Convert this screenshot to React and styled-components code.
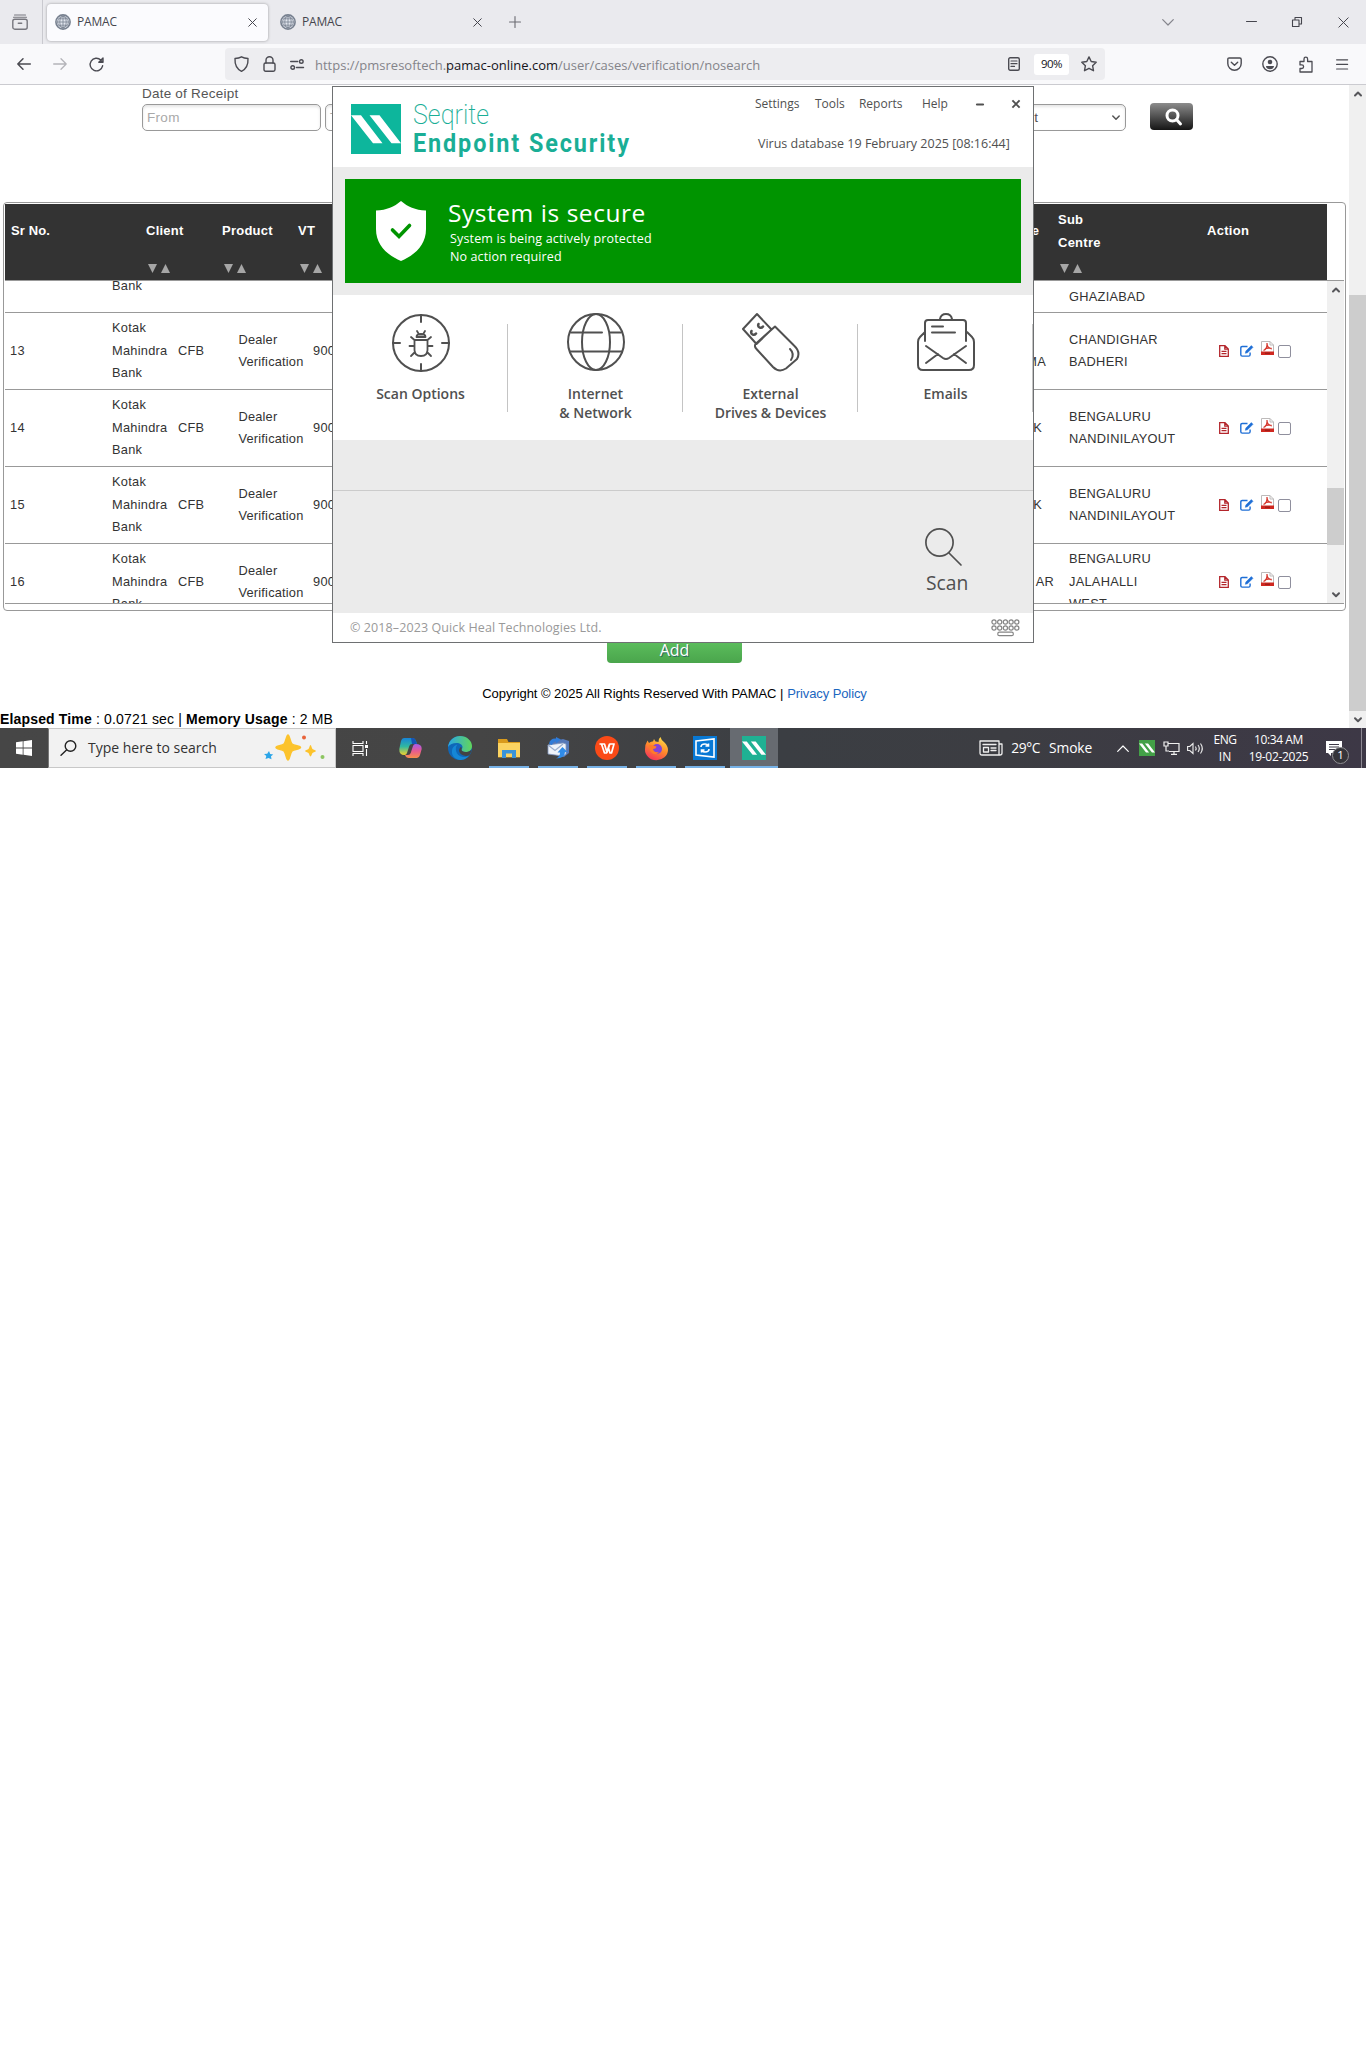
import React from "react";
import styled, { createGlobalStyle } from "styled-components";

const ui = `"Open Sans", "Noto Sans", sans-serif`;
const arial = `"Liberation Sans", Arial, sans-serif`;

const Global = createGlobalStyle`
  * { box-sizing: border-box; }
  body { margin: 0; background: #fff; font-family: ${arial}; }
`;

const Desktop = styled.div`
  position: relative; width: 1366px; height: 2060px; overflow: hidden;
  display: flex; flex-direction: column; background: #fff;
`;

/* Text run with its own size, tracking and colour */
const Text = styled.span`
  display: block; white-space: nowrap; flex: none;
  font-family: ${(p) => p.$font || ui};
  font-size: ${(p) => p.$size || 12}px;
  font-weight: ${(p) => p.$weight || 400};
  letter-spacing: ${(p) => p.$track || 0}px;
  line-height: ${(p) => (p.$line ? p.$line + "px" : "1.3")};
  color: ${(p) => p.$color || "inherit"};
`;

const Svg = styled.svg`display: block; flex: none; overflow: visible;`;

/* Icon slot: fixed width so that icons sit on a regular pitch */
const Slot = styled.div`
  width: ${(p) => p.$w}px; height: ${(p) => (p.$h ? p.$h + "px" : "100%")}; flex: none;
  display: flex; align-items: center; justify-content: center;
`;
const Spacer = styled.div`flex: 1;`;

/* ---------- Browser chrome ---------- */
const TabBar = styled.div`
  height: 44px; background: #eaeaee; display: flex; align-items: center; flex: none; color: #45454d;
`;
const FirefoxView = styled.div`
  width: 43px; height: 44px; border-right: 1px solid #c9c9cf; display: flex; align-items: center; padding-left: 12px;
`;
const Tab = styled.div`
  width: 221px; height: 37px; margin-left: 4px; padding: 0 9px 0 8px; border-radius: 4px;
  display: flex; align-items: center; gap: 6px;
  background: ${(p) => (p.$active ? "#fbfbfe" : "transparent")};
  box-shadow: ${(p) => (p.$active ? "0 0 3px rgba(0,0,0,.35)" : "none")};
`;
const NavBar = styled.div`
  height: 41px; flex: none; background: #f9f9fb; border-bottom: 1px solid #cbcbd0; display: flex; align-items: center;
  padding-left: 6px; color: #4b4b52;
`;
const UrlBar = styled.div`
  width: 880px; height: 32px; margin-left: 111px; border-radius: 4px; background: #ededf0;
  display: flex; align-items: center; padding-left: 2px;
`;
const UrlText = styled(Text)`margin-left: 4px; padding-top: 2px; color: #84848a; b { font-weight: 400; color: #15141a; }`;
const Zoom = styled.div`
  width: 35px; height: 21px; border-radius: 3px; background: #fff; display: flex; align-items: center; justify-content: center; margin: 1px 3px 0 6px;
  color: #15141a;
`;

const Globe = () => (
  <Svg width="16" height="16" viewBox="0 0 16 16" fill="none" stroke="#77808f">
    <circle cx="8" cy="8" r="7.1" strokeWidth="1.6" fill="#e2e6ee" />
    <path d="M8 2v12M2.3 8h11.4M3.5 4.8h9M3.5 11.2h9" strokeWidth=".8" />
    <ellipse cx="8" cy="8" rx="3.2" ry="6" strokeWidth=".8" />
    <circle cx="8" cy="8" r="5.4" strokeWidth=".8" />
  </Svg>
);
const Cross = ({ s = 9, w = 1.1, c = "currentColor" }) => (
  <Svg width={s} height={s} viewBox="0 0 10 10" stroke={c} strokeWidth={w}><path d="M.5 .5l9 9M9.5 .5l-9 9" /></Svg>
);
const Line = ({ w, h, vb, d, sw = 1.4, fill = "none", c = "currentColor", children }) => (
  <Svg width={w} height={h} viewBox={vb || `0 0 ${w} ${h}`} fill={fill} stroke={c} strokeWidth={sw} strokeLinecap="round" strokeLinejoin="round">
    {d && <path d={d} />}{children}
  </Svg>
);

function Browser() {
  return (
    <>
      <TabBar>
        <FirefoxView>
          <Line w={16} h={16} d="M2.5 1h11M1.5 3.2h13" sw={1.1} c="#77777e">
            <rect x=".8" y="5.2" width="14.4" height="10" rx="2" strokeWidth="1.4" /><path d="M6.3 9.3h3.4" strokeWidth="1.4" />
          </Line>
        </FirefoxView>
        {[true, false].map((active) => (
          <Tab key={String(active)} $active={active}>
            <Globe /><Text $size={12} $track={-0.2}>PAMAC</Text><Spacer /><Slot $w={14}><Cross /></Slot>
          </Tab>
        ))}
        <Slot $w={43}><Line w={12} h={12} d="M6 .5v11M.5 6h11" sw={1.1} c="#6a6a72" /></Slot>
        <Spacer />
        <Slot $w={30}><Line w={12} h={7} d="M.7 .7l5.3 5.3L11.3 .7" sw={1.2} c="#85858c" /></Slot>
        <Slot $w={52} /><Slot $w={32}><Line w={11} h={2} d="M.5 .5h10" sw={1} /></Slot>
        <Slot $w={14} /><Slot $w={32}><Line w={10} h={10} d="M.5 3h6.5v6.5H.5zM3 3V.5h6.5V7H7" sw={1.1} /></Slot>
        <Slot $w={14} /><Slot $w={32}><Cross s={11} w={0.9} /></Slot><Slot $w={7} />
      </TabBar>
      <NavBar>
        <Slot $w={36}><Line w={14} h={12} d="M13.3 6H.8M6 .8L.8 6 6 11.2" sw={1.5} /></Slot>
        <Slot $w={36}><Line w={14} h={12} d="M.7 6h12.5M8 .8L13.2 6 8 11.2" sw={1.3} c="#b4b4b9" /></Slot>
        <Slot $w={36}><Line w={15} h={15} d="M13.6 8.8A6.3 6.3 0 1 1 11.8 3L13.8 5M14 1v4.2H9.8z" sw={1.4} /></Slot>
        <UrlBar>
          <Slot $w={28}><Line w={15} h={16} d="M7.5 .8c2 1.2 4 1.6 6.5 1.7.3 6-1.7 10.500-6.500 12.800C2.700 13 .7 8.500 1 2.500 3.500 2.400 5.500 2 7.500 .8z" /></Slot>
          <Slot $w={28}><Line w={13} h={16} d="M3 7V4.200a3.500 3.500 0 0 1 7 0V7"><rect x="1" y="7" width="11" height="8.200" rx="1.600" /></Line></Slot>
          <Slot $w={28}><Line w={14} h={11} d="M.7 2.500h7M6.500 8.500h7"><circle cx="11.300" cy="2.500" r="1.800" /><circle cx="2.700" cy="8.500" r="1.800" /></Line></Slot>
          <UrlText $size={13} $track={0}>https://pmsresoftech.<b>pamac-online.com</b>/user/cases/verification/nosearch</UrlText>
          <Spacer />
          <Slot $w={28}><Line w={12} h={14} d="M3 4h6M3 6.700h6M3 9.400h3.500" sw={1.200}><rect x=".7" y=".7" width="10.600" height="12.600" rx="1.500" strokeWidth="1.400" /></Line></Slot>
          <Zoom><Text $size={11.5} $track={-0.5}>90%</Text></Zoom>
          <Slot $w={33}><Line w={16} h={16} d="M8 .9l2.200 4.600 5 .7-3.600 3.500.9 5L8 12.300 3.500 14.700l.9-5L.8 6.200l5-.7z" /></Slot>
        </UrlBar>
        <Spacer />
        <Slot $w={36}><Line w={15} h={14} d="M2.200 1h10.600q1.400 0 1.400 1.400V6.500a6.700 6.700 0 0 1-13.400 0V2.400Q.8 1 2.200 1zM4.300 5.300l3.200 3 3.200-3" /></Slot>
        <Slot $w={36}><Line w={16} h={16}><circle cx="8" cy="8" r="7.200" /><circle cx="8" cy="6" r="2.300" fill="currentColor" stroke="none" /><path d="M4 10h8c0 2-2 3.300-4 3.300S4 12 4 10z" fill="currentColor" stroke="none" /></Line></Slot>
        <Slot $w={36}><Line w={14} h={17} d="M1 7V5.500h4V3a1.800 1.800 0 0 1 3.600 0v2.500h4.400v10.500H1v-3.500h1.800a1.800 1.800 0 0 0 0-3.600H1z" sw={1.300} /></Slot>
        <Slot $w={36}><Line w={12} h={11} d="M.6 .8h11M.6 5.400h11M.6 10h11" sw={1.200} /></Slot>
        <Slot $w={6} />
      </NavBar>
    </>
  );
}

/* ---------- Web page ---------- */
const Page = styled.div`height: 643px; flex: none; display: flex;`;
const Content = styled.div`width: 1349px; display: flex; flex-direction: column; overflow: hidden;`;
const ScrollTrack = styled.div`
  width: 17px; flex: none; background: #f0f0f0; display: flex; flex-direction: column;
  > :last-child { margin-top: auto; }
`;
const Thumb = styled.div`height: ${(p) => p.$h}px; margin-top: ${(p) => p.$top}px; background: #cdcdcd;`;
const ScrollArrow = ({ down }) => (
  <Slot $w={17} $h={17}>
    <Line w={8} h={6} d={down ? "M1 1.200l3 3 3-3" : "M1 4.500l3-3 3 3"} sw={2} c="#56565a" />
  </Slot>
);

const FilterLabel = styled(Text)`margin: 1px 0 2px 142px;`;
const Filters = styled.div`display: flex; padding-left: 142px; height: 27px; align-items: center;`;
const Field = styled.div`
  width: ${(p) => p.$w}px; margin-right: ${(p) => p.$mr || 0}px; height: 27px; border: 1px solid #999; border-radius: 5px;
  box-shadow: inset 0 2px 3px rgba(0,0,0,.1);
  display: flex; align-items: center; padding: 0 5px 0 4px; color: #555;
`;
const FieldText = styled(Text)`margin-left: ${(p) => p.$ml || 0}px;`;
const SearchButton = styled.div`
  width: 43px; height: 27px; margin: -3px 0 0 24px; border-radius: 4px; background: linear-gradient(#8c8c8c, #151515);
  display: flex; align-items: center; justify-content: center; padding: 2px 0 0 3px;
`;

const TableFrame = styled.div`
  margin: 71px 0 0 3px; width: 1343px; height: 409px; flex: none; border: 1px solid #999; border-radius: 4px; padding: 1px 1px 0 1px;
`;
const HeadRow = styled.div`
  width: 1322px; height: 76px; background: #333; color: #fff; display: grid;
  grid-template-columns: 141px 76px 76px 200px 541px 19px 149px 120px;
`;
const HeadCell = styled.div`
  display: flex; flex-direction: column; justify-content: flex-end; padding-bottom: ${(p) => (p.$nosort ? 38 : 0)}px;
  align-items: ${(p) => (p.$end ? "flex-end" : "flex-start")};
`;
const HeadText = styled(Text)`padding-bottom: ${(p) => p.$pb || 0}px;`;
const Sorts = styled.div`display: flex; gap: 4px; margin-left: ${(p) => p.$ml ?? 2}px; height: 23px; align-items: center; padding-bottom: 1px;`;
const BodyWrap = styled.div`display: flex; height: 324px; border-top: 1px solid #999; border-bottom: 1px solid #999;`;
const Rows = styled.div`width: 1322px; overflow: hidden; color: #333;`;
const Row = styled.div`
  height: ${(p) => (p.$first ? 32 : 77)}px; border-bottom: 1px solid #999; display: grid; align-items: ${(p) => (p.$first ? "start" : "center")};
  grid-template-columns: 107px 66px 60.5px 74.5px 693px 63px 145px 1fr;
`;
const Cell = styled.div`
  display: flex; flex-direction: column; align-items: ${(p) => (p.$end ? "flex-end" : "flex-start")};
  padding-right: ${(p) => p.$pr || 0}px; padding-left: ${(p) => p.$pl || 0}px; margin-top: ${(p) => p.$mt || 0}px;
`;
const Actions = styled.div`display: flex; align-items: center; height: 14px; margin-top: -1px;`;
const PdfSlot = styled.div`width: 13px; margin: -5px 4px 0 1px;`;
const CheckBox = styled.div`width: 13px; height: 13px; border: 1px solid #8f8f9d; border-radius: 2px; background: #fff; margin-top: 1px;`;

const AddRow = styled.div`display: flex; justify-content: center; height: 52px; flex: none;`;
const AddButton = styled.div`
  width: 135px; height: 34px; margin-top: 18px; border-radius: 4px; background: linear-gradient(#66cc66, #4aa54c);
  display: flex; justify-content: center; align-items: center; padding-top: 9px; color: #fff; text-shadow: 1px 1px 0 #2a6b60;
`;
const Copyright = styled.div`
  display: flex; justify-content: center; gap: 4px; margin-top: 22px; color: #000; height: 18px; flex: none;
`;
const Elapsed = styled(Text)`margin-top: 8px; color: #000;`;

const sort = (ml) => (
  <Sorts $ml={ml}>
    <Svg width="9" height="9"><path d="M0 0h9L4.500 9z" fill="#a6a6a6" /></Svg>
    <Svg width="9" height="9"><path d="M0 9h9L4.500 0z" fill="#a6a6a6" /></Svg>
  </Sorts>
);
const Head = ({ children, pb = 15, ml }) => (
  <HeadCell>
    {children.map((t) => <HeadText key={t} $font={arial} $weight={700} $size={13} $track={0.25} $line={23}>{t}</HeadText>)}
    <Slot $w={1} $h={pb} />{sort(ml)}
  </HeadCell>
);
const BodyText = ({ children, track = 0.27 }) => <Text $font={arial} $size={12.8} $track={track} $line={22.4}>{children}</Text>;

const rows = [
  { n: "13", c: "MA", pr: 23, second: true, sub: ["CHANDIGHAR", "BADHERI"] },
  { n: "14", c: "K", pr: 27, sub: ["BENGALURU", "NANDINILAYOUT"] },
  { n: "15", c: "K", pr: 27, sub: ["BENGALURU", "NANDINILAYOUT"] },
  { n: "16", c: "AR", pr: 15, sub: ["BENGALURU", "JALAHALLI", "WEST"] },
];

const DocIcon = () => (
  <Svg width="10" height="12" viewBox="0 0 10 12" fill="none" stroke="#b3252b" strokeWidth="1.300">
    <path d="M.7 .7h5.300l3.300 3.300v7.300H.7zM5.800 .7V4.200h3.500M2.500 6.300h5M2.500 8.700h5" />
  </Svg>
);
const EditIcon = () => (
  <Svg width="14" height="12" viewBox="0 0 14 12" fill="none" stroke="#1f6fd6" strokeWidth="1.400">
    <path d="M7.500 1.500H2.200Q.8 1.500 .8 2.900v6.800Q.8 11.100 2.200 11.100h6.500q1.400 0 1.400-1.400V7.500" />
    <path d="M5.300 8.300l.5-2.200L11.300 .6l1.700 1.700-5.500 5.500z" fill="#1f6fd6" strokeWidth=".5" />
  </Svg>
);
const PdfIcon = () => (
  <Svg width="13" height="14" viewBox="0 0 13 14">
    <path d="M.5 .5h8.500l3.500 3.500v9.500H.5z" fill="#fff" stroke="#bdbaba" />
    <path d="M9 .5V4h3.500" fill="none" stroke="#bdbaba" />
    <path d="M2.500 9.500c2.500-1 4-3.500 3.500-7.500M6 2.500c0 3 1.700 4.800 4.800 5.300M4 7.800c2-.9 4-1 6.500-.4" fill="none" stroke="#d63a30" strokeWidth="1.300" />
    <path d="M0 10.500h13V14H0z" fill="#cf2820" /><path d="M4 12.200h5" stroke="#8d1a15" />
  </Svg>
);

function WebPage() {
  return (
    <Page>
      <Content>
        <FilterLabel $font={arial} $size={13.5} $line={16} $color="#555" $track={0.22}>Date of Receipt</FilterLabel>
        <Filters>
          <Field $w={179} $mr={4}><Text $font={arial} $size={13.5} $color="#a9a9a9" $track={0.3}>From</Text></Field>
          <Field $w={801}>
            <Text $font={arial} $size={13.5} $color="#a9a9a9">T</Text>
            <FieldText $font={arial} $size={13.5} $ml={696}>t</FieldText>
            <Spacer />
            <Line w={8} h={6} d="M.8 1l3.200 3.300L7.200 1" sw={1.500} c="#555" />
          </Field>
          <SearchButton>
            <Line w={17} h={18} c="#fff" sw={3}><circle cx="7.500" cy="7.500" r="5.500" /><path d="M11.500 11.500l4 4.500" /></Line>
          </SearchButton>
        </Filters>
        <TableFrame>
          <HeadRow>
            <HeadCell $nosort><Cell $pl={6}><HeadText $font={arial} $weight={700} $size={13} $track={0.1} $line={23}>Sr No.</HeadText></Cell></HeadCell>
            <Head>{["Client"]}</Head>
            <Head>{["Product"]}</Head>
            <Head>{["VT"]}</Head>
            <HeadCell $end $nosort><HeadText $font={arial} $weight={700} $size={13} $line={23}>e</HeadText></HeadCell>
            <div />
            <Head pb={3} ml={2}>{["Sub", "Centre"]}</Head>
            <HeadCell $nosort><HeadText $font={arial} $weight={700} $size={13} $track={0.3} $line={23}>Action</HeadText></HeadCell>
          </HeadRow>
          <BodyWrap>
            <Rows>
              <Row $first>
                <div /><Cell $mt={-6}><BodyText>Bank</BodyText></Cell><div /><div /><div /><div />
                <Cell $mt={5}><BodyText>GHAZIABAD</BodyText></Cell><div />
              </Row>
              {rows.map((r) => (
                <Row key={r.n}>
                  <Cell $pl={5}><BodyText>{r.n}</BodyText></Cell>
                  <Cell><BodyText>Kotak</BodyText><BodyText>Mahindra</BodyText><BodyText>Bank</BodyText></Cell>
                  <Cell><BodyText>CFB</BodyText></Cell>
                  <Cell><BodyText track={0.2}>Dealer</BodyText><BodyText track={0.2}>Verification</BodyText></Cell>
                  <Cell><BodyText>900</BodyText></Cell>
                  <Cell $end $pr={r.pr} $mt={r.second ? 23 : 0}><BodyText>{r.c}</BodyText></Cell>
                  <Cell>{r.sub.map((s) => <BodyText key={s}>{s}</BodyText>)}</Cell>
                  <Actions>
                    <Slot $w={20}><DocIcon /></Slot><Slot $w={26}><EditIcon /></Slot>
                    <PdfSlot><PdfIcon /></PdfSlot><CheckBox />
                  </Actions>
                </Row>
              ))}
            </Rows>
            <ScrollTrack><ScrollArrow /><Thumb $h={57} $top={190} /><ScrollArrow down /></ScrollTrack>
          </BodyWrap>
        </TableFrame>
        <AddRow><AddButton><Text $size={16} $weight={400}>Add</Text></AddButton></AddRow>
        <Copyright>
          <Text $font={arial} $size={13} $line={18} $track={-0.06}>Copyright © 2025 All Rights Reserved With PAMAC |</Text>
          <Text $font={arial} $size={13} $line={18} $track={-0.1} $color="#1b66c0">Privacy Policy</Text>
        </Copyright>
        <Elapsed $font={arial} $size={14} $line={17} $track={0.16}><b>Elapsed Time</b> : 0.0721 sec | <b>Memory Usage</b> : 2 MB</Elapsed>
      </Content>
      <ScrollTrack><ScrollArrow /><Thumb $h={416} $top={193} /><ScrollArrow down /></ScrollTrack>
    </Page>
  );
}

/* ---------- Security window floating over the page ---------- */
const Window = styled.div`
  position: absolute; left: 332px; top: 86px; width: 702px; height: 557px; background: #fff; border: 1px solid #6e7072;
  display: flex; flex-direction: column; color: #505050; overflow: hidden;
`;
const WinHeader = styled.div`height: 80px; flex: none; display: flex; padding: 17px 0 0 18px;`;
const Brand = styled.div`width: 300px; margin: -2px 0 0 12px; color: #1aae96;`;
const BrandThin = styled(Text)`transform: scaleX(.93); transform-origin: left;`;
const BrandBold = styled(Text)`width: 230px; transform: scaleX(.9); transform-origin: left;`;
const WinMenu = styled.div`display: flex; height: 26px; margin-top: -13px; align-items: center;`;
const MenuItem = styled(Text)`width: ${(p) => p.$w}px;`;
const HeaderRight = styled.div`margin-left: 44px; width: 280px;`;
const Virus = styled(Text)`margin: 16px 0 0 3px;`;
const StatusArea = styled.div`height: 128px; background: #ebebeb; padding: 12px; flex: none;`;
const Status = styled.div`height: 104px; background: #009400; color: #fff; display: flex; padding: 22px 0 0 31px;`;
const StatusText = styled.div`margin: -5px 0 0 22px;`;
const StatusLine = styled(Text)`padding-left: 2px;`;
const Tiles = styled.div`height: 145px; flex: none; display: flex;`;
const Tile = styled.div`
  width: 175px; flex: none; display: flex; flex-direction: column; align-items: center; padding-top: 19px;
  background: linear-gradient(#c4c4c4, #c4c4c4) right 29px / 1px 88px no-repeat;
`;
const TileIcon = styled.div`height: 70px;`;
const Lower = styled.div`height: 50px; flex: none; background: #ebebeb;`;
const ScanArea = styled.div`
  height: 123px; flex: none; background: #ebebeb; border-top: 1px solid #cbcbcb; display: flex; flex-direction: column; align-items: flex-end; padding: 37px 66px 0 0;
`;
const ScanButton = styled.div`width: 42px; display: flex; flex-direction: column; align-items: flex-start;`;
const ScanLabel = styled(Text)`margin: 4px 0 0 1px;`;
const WinFooter = styled.div`flex: 1; display: flex; align-items: center; justify-content: space-between; padding: 0 13px 0 17px; color: #999;`;
const FooterText = styled(Text)`padding-top: 2px;`;

const Logo = ({ s, bg }) => (
  <Svg width={s} height={s} viewBox="0 0 50 50">
    <path fill={bg} d="M0 0h50v50H0z" /><path fill="#fff" d="M0 11.300h10l21.500 28h-9.500zM18.500 11.300h10l21.500 28h-9.500z" />
  </Svg>
);
const tileIcons = {
  scan: (
    <Line w={58} h={58} sw={2}>
      <circle cx="29" cy="29" r="28" /><path d="M29 1v7M29 50v7M1 29h7M50 29h7" />
      <path d="M25 17l2 3.500h4l2-3.500M24.500 23q0-3 4.500-3t4.500 3zM22.500 26h13v10q0 6-6.500 6t-6.500-6zM19 23l3.500 3M39 23l-3.500 3M17.500 32h5M35.500 32h5M19 42l4-4M39 42l-4-4" strokeWidth="1.800" />
    </Line>
  ),
  net: (
    <Line w={58} h={58} sw={2}>
      <circle cx="29" cy="28" r="28" /><ellipse cx="29" cy="28" rx="14" ry="28" /><path d="M4 18.500h31M43 18.500h11M3 37.500h52" />
    </Line>
  ),
  usb: (
    <Line w={58} h={58} sw={2}>
      <path d="M1 15L15 0 29.500 15.500 14.500 30zM13.500 30L33 12.500 52 31.500Q59 38 55 45L44 54.500Q37 59 31 53L14.500 35Q12 32.500 13.500 30z" fill="#fff" />
      <path d="M48 35Q53 40 49 46" />
      <path d="M9.500 17q-1 2.500 1 3.500t3.500-1M16.500 10q-1 2.500 1 3.500t3.500-1" strokeWidth="2.500" />
    </Line>
  ),
  mail: (
    <Line w={58} h={58} sw={2}>
      <path d="M8 27V9q0-3 3-3h35q3 0 3 3v18M23 5q1-5 6-5t6 5M8 18L3 23q-2 2-2 5v23q0 5 5 5h46q5 0 5-5V28q0-3-2-5l-5-5M9 32l17 12q3 2 6 0L49 32M9 49l12-9M49 49l-12-9M15 12.500h11M15 18.500h23" />
    </Line>
  ),
};
const tiles = [["scan", "Scan Options"], ["net", "Internet", "& Network"], ["usb", "External", "Drives & Devices"], ["mail", "Emails"]];

function SecurityWindow() {
  return (
    <Window>
      <WinHeader>
        <Logo s={50} bg="#0db69c" />
        <Brand>
          <BrandThin $font="Roboto, sans-serif" $size={27} $weight={200} $line={27}>Seqrite</BrandThin>
          <BrandBold $font="Roboto, sans-serif" $size={26} $weight={700} $line={28} $track={2.1}>Endpoint Security</BrandBold>
        </Brand>
        <HeaderRight>
          <WinMenu>
            <MenuItem $w={60}>Settings</MenuItem><MenuItem $w={44}>Tools</MenuItem><MenuItem $w={63}>Reports</MenuItem><MenuItem $w={54}>Help</MenuItem>
            <Slot $w={8}><Line w={8} h={2} d="M1 1.500h6" sw={2.200} /></Slot><Slot $w={28} /><Cross s={8} w={2.400} />
          </WinMenu>
          <Virus $size={12.5} $line={22}>Virus database 19 February 2025 [08:16:44]</Virus>
        </HeaderRight>
      </WinHeader>
      <StatusArea>
        <Status>
          <Svg width="50" height="60" viewBox="0 0 50 60">
            <path fill="#fff" d="M25 0C32 6 39 9 50 9.500V28C50 44 39 54 25 60 11 54 0 44 0 28V9.500C11 9 18 6 25 0z" />
            <path d="M16.500 29l6.500 6.500L33.500 24.500" fill="none" stroke="#009400" strokeWidth="3.600" strokeLinecap="round" />
          </Svg>
          <StatusText>
            <Text $size={24.5} $weight={500} $line={34} $track={0.55}>System is secure</Text>
            <StatusLine $size={12.5} $line={18} $track={0.15}>System is being actively protected</StatusLine>
            <StatusLine $size={12.5} $line={18} $track={0.12}>No action required</StatusLine>
          </StatusText>
        </Status>
      </StatusArea>
      <Tiles>
        {tiles.map(([k, ...labels]) => (
          <Tile key={k}>
            <TileIcon>{tileIcons[k]}</TileIcon>
            {labels.map((l) => <Text key={l} $size={14} $weight={600} $line={19}>{l}</Text>)}
          </Tile>
        ))}
      </Tiles>
      <Lower />
      <ScanArea>
        <ScanButton>
          <Line w={37} h={38} sw={1.700}><circle cx="14.500" cy="14.500" r="13.600" /><path d="M24 25l12 12" /></Line>
          <ScanLabel $size={19.3} $line={26}>Scan</ScanLabel>
        </ScanButton>
      </ScanArea>
      <WinFooter>
        <FooterText $size={12.5} $track={0.1}>© 2018–2023 Quick Heal Technologies Ltd.</FooterText>
        <Svg width="29" height="18" fill="none" stroke="#858585" strokeWidth="1.200">
          {[3, 8.7, 14.4, 20.1, 25.8].map((x) => <g key={x}><circle cx={x} cy="3" r="2.100" /><circle cx={x} cy="9" r="2.100" /></g>)}
          <rect x="6.800" y="13.200" width="15.500" height="3.500" rx="1.500" />
        </Svg>
      </WinFooter>
    </Window>
  );
}

/* ---------- Taskbar ---------- */
const Bar = styled.div`
  height: 40px; flex: none; display: flex; align-items: center; color: #fff;
  background: linear-gradient(90deg, #464646 0, #454545 480px, #3b3e43 780px, #3c3d42 1000px, #3d3846 1366px);
`;
const SearchBox = styled.div`
  width: 288px; height: 40px; background: #f2f2f2; border: 1px solid #c8c8c8; border-left-color: #777; display: flex; align-items: center; padding: 0 10px 0 11px; color: #333;
`;
const TaskApp = styled.div`
  width: ${(p) => p.$w || 40}px; height: 40px; margin-left: ${(p) => p.$ml ?? 9}px; flex: none; display: flex; align-items: center; justify-content: center;
  border-bottom: 2px solid ${(p) => (p.$running ? "#76b1e6" : "transparent")}; border-top: 2px solid transparent;
  background: ${(p) => (p.$active ? "#676b71" : "transparent")};
`;
const TrayStack = styled.div`width: ${(p) => p.$w}px; display: flex; flex-direction: column; align-items: center;`;
const ShowDesktop = styled.div`width: 5px; height: 40px; border-left: 1px solid #8c8892;`;
const Badge = styled.div`
  position: absolute; right: -6px; bottom: -8px; width: 17px; height: 17px; border-radius: 9px; border: 1px solid #8f8f92; background: #35343a;
  display: flex; align-items: center; justify-content: center;
`;
const Notice = styled.div`position: relative; margin-left: 15px; width: 17px;`;

function Taskbar() {
  return (
    <Bar>
      <Slot $w={48}><Svg width="16" height="16" fill="#fff"><path d="M0 2.300L6.700 1.300V7.600H0zM7.500 1.200L16 0V7.600H7.500zM0 8.400H6.700V14.700L0 13.700zM7.500 8.400H16V16L7.500 14.800z" /></Svg></Slot>
      <SearchBox>
        <Line w={17} h={16} sw={1.400} c="#222" d="M6.500 10L1 15.300"><circle cx="10.500" cy="6" r="5.300" /></Line>
        <FieldText $size={14} $ml={11}>Type here to search</FieldText>
        <Spacer />
        <Svg width="61" height="26" viewBox="0 0 61 26">
          <path d="M24 0c1.500 0 2 7 4 9s8.500 1.800 8.500 3.500-6.500 1.500-8.500 3.500-2.500 9-4 9-2-7-4-9-8-1.800-8-3.500 6-1.500 8-3.500 2.500-9 4-9z" fill="#fcc32c" stroke="#fcc32c" strokeWidth="1.500" strokeLinejoin="round" />
          <path d="M46.500 10c.8 0 1.200 3 2 4s3.500 1 3.500 2-2.700 1-3.500 2-1.200 3.500-2 3.500-1.200-2.500-2-3.500-3.500-1-3.500-2 2.700-1 3.500-2 1.200-4 2-4z" fill="#fcc32c" />
          <path d="M5 16l1.200 3 3 .5-2.200 1.800.5 3L4.500 23 1.500 24l.8-3L0 19l3.200-.3z" fill="#2ba5e8" />
          <circle cx="40" cy="2.500" r="2" fill="#e8633a" /><circle cx="58.500" cy="22" r="2" fill="#8cc561" />
        </Svg>
      </SearchBox>
      <TaskApp $ml={4}><Svg width="17" height="15" fill="none" stroke="#fff" strokeWidth="1.100"><path d="M1 0v2.500h10V0M1 15v-2.500h10V15M1 4.500h10v6H1zM14.500 0v3M14.500 8v7" /><path d="M13 4h3v3h-3z" fill="#fff" stroke="none" /></Svg></TaskApp>
      <TaskApp $ml={10}>
        <Svg width="23" height="22" viewBox="0 0 23 22">
          <defs>
            <linearGradient id="cpl" x1="0" y1="0" x2="0" y2="1"><stop offset="0" stopColor="#1784d8" /><stop offset=".5" stopColor="#30b8a0" /><stop offset="1" stopColor="#f5d22c" /></linearGradient>
            <linearGradient id="cpr" x1="0" y1="0" x2="0" y2="1"><stop offset="0" stopColor="#a35cf0" /><stop offset=".5" stopColor="#e85a90" /><stop offset="1" stopColor="#f98e4b" /></linearGradient>
          </defs>
          <path d="M5 1h8q3 0 4 3l1 3h-5q-2 0-2.700 2L8 16q-.6 2-2.500 2Q0 18 .3 12L2 4q.8-3 3-3z" fill="url(#cpl)" />
          <path d="M12 1h2q2 0 3 3l1 3h-5z" fill="#1554b5" />
          <path d="M18 21h-8q-3 0-4-3h3q2 0 2.700-2L14 9q.6-2 2.500-2 6.500 0 6.200 5L21 18q-.8 3-3 3z" fill="url(#cpr)" />
        </Svg>
      </TaskApp>
      <TaskApp $ml={10}>
        <Svg width="24" height="24" viewBox="0 0 24 24">
          <defs><linearGradient id="edg"><stop offset="0" stopColor="#2aa7e6" /><stop offset="1" stopColor="#62d65a" /></linearGradient></defs>
          <circle cx="12" cy="12" r="12" fill="#0f67b8" />
          <path d="M0 11C1 4 6 0 12 0c7 0 12 5 12 10 0 4-3 6-6 6-3.500 0-4.500-1.300-4.500-2.200 0-.6 1-1 1-2.800 0-2-2.500-4-6-4S1.500 8.500 0 11z" fill="url(#edg)" />
          <path d="M9.500 8.500C6.500 11 7 20 15 21c3 .3 5-.7 6.500-2C19 23 15 24 12 24 6 23 3.500 19 4 15c.4-4 3-6 5.500-6.500z" fill="#1587d6" />
          <path d="M13.500 13.800c0 1 1.500 2.400 5 2.200 2 0 4-1 5.200-2.500-.5 2.500-1.500 5-3 6-4 1.500-9.200-1-9.700-5 0-1.500 1-3 2-3.500 1 .5.500 2 .5 2.800z" fill="#434343" />
        </Svg>
      </TaskApp>
      <TaskApp $running>
        <Svg width="22" height="19" viewBox="0 0 22 19"><path d="M0 0h9l1.500 3H22v15.500H0z" fill="#d99a1c" /><path d="M0 4h22v14H0z" fill="#fbd361" /><path d="M4 19v-8h14v8h-4v-4.500H8V19z" fill="#3b94d9" /></Svg>
      </TaskApp>
      <TaskApp $running>
        <Svg width="22" height="22" viewBox="0 0 22 22">
          <path d="M4 5l12-3 6 2v12l-5 4-13-3z" fill="#5578b8" />
          <path d="M1 8l15-2 3 1v10l-3 2-15-2z" fill="#eef3fa" stroke="#8397bd" strokeWidth=".8" />
          <path d="M1 8l7 5.500L16 7" fill="none" stroke="#9aaccb" strokeWidth="1.200" />
          <path d="M2 7Q3 1 9 1.500V0l5 2.500L9 6.500V4.500Q6 4.500 5 8z" fill="#2f7bd8" />
          <path d="M9 21.500q4-2 4-6h-2.500L15.500 10l5 5H18q0 6-9 6.500z" fill="#2f8be8" />
        </Svg>
      </TaskApp>
      <TaskApp $running>
        <Svg width="24" height="24"><circle cx="12" cy="12" r="12" fill="#fa4a17" /><path d="M4.500 8h5l2.500 8.500L14.800 8h5M6.500 8l3 9h2l3-9 M13.500 12l1.500 5h1.500L19 8" fill="none" stroke="#fff" strokeWidth="1.700" strokeLinejoin="round" /></Svg>
      </TaskApp>
      <TaskApp $running>
        <Svg width="23" height="23" viewBox="0 0 23 23">
          <defs><linearGradient id="ffx" x1=".8" y1="0" x2=".3" y2="1"><stop offset="0" stopColor="#ffe14a" /><stop offset=".5" stopColor="#ff8a2a" /><stop offset="1" stopColor="#f5325c" /></linearGradient></defs>
          <path d="M2.500 3.500L4 6q2-2 4-1.500L9 2l1.500 2.500q2 0 3 .5Q13 2 15.500 0q.5 3 4 5.500Q23 9 23 13a11.500 10.500 0 0 1-23-.5Q0 7 2.500 3.500z" fill="url(#ffx)" />
          <circle cx="12" cy="12" r="5" fill="#8343d8" /><path d="M4 8q5 0 7.500 1.500Q11 12 8 12q1 4 6 3-3 4-7 1Q4 13 4 8z" fill="#ff7a2a" />
        </Svg>
      </TaskApp>
      <TaskApp $running>
        <Svg width="24" height="24" fill="none" stroke="#fff"><path d="M0 0h24v24H0z" fill="#0878d4" stroke="none" /><path d="M3 5l18-2v18L3 19z" strokeWidth="1.600" /><path d="M8 11q0-3 4-3 2 0 3 1.500M15.500 7.500v2.500h-3M16 13q0 3-4 3-2 0-3-1.500M8.500 16.500V14h3" strokeWidth="1.600" /></Svg>
      </TaskApp>
      <TaskApp $running $active $w={48} $ml={5}><Logo s={24} bg="#1fb193" /></TaskApp>
      <Spacer />
      <Line w={24} h={16} c="#eee" sw={1.300}><path d="M1 1h19v14H3Q1 15 1 13zM20 4h3v9q0 2-2 2h-4M4 4.500h13M12 8h5M12 10.500h5" /><rect x="4.500" y="7.500" width="5" height="4.500" /></Line>
      <FieldText $size={13.8} $ml={8} $track={-0.4}>29°C</FieldText>
      <FieldText $size={13.8} $ml={9} $track={-0.15}>Smoke</FieldText>
      <Slot $w={24} />
      <Slot $w={14}><Line w={12} h={7} d="M.7 6.300L6 1l5.300 5.300" sw={1.200} /></Slot>
      <Slot $w={9} />
      <Logo s={16} bg="#43a047" />
      <Slot $w={32}><Svg width="17" height="14" fill="none" stroke="#eee" strokeWidth="1.200"><path d="M5 2.500h11v8H6M8 13.300h6M11 10.500v3M1 1h4v4H1zM3 5v5h3" /></Svg></Slot>
      <Slot $w={17}><Svg width="17" height="13" fill="none" stroke="#eee" strokeWidth="1.100"><path d="M.6 4.500h2.200L6 1.500v10L2.800 8.500H.6zM8.500 4.500q1.300 2 0 4M11 3q2.600 3.500 0 7M13.500 1.500q3.600 5 0 10" /></Svg></Slot>
      <TrayStack $w={42}><Text $size={12} $line={17} $track={-0.4}>ENG</Text><Text $size={12} $line={17}>IN</Text></TrayStack>
      <TrayStack $w={65}><Text $size={12} $line={17} $track={-0.4}>10:34 AM</Text><Text $size={12} $line={17} $track={-0.3}>19-02-2025</Text></TrayStack>
      <Notice>
        <Svg width="17" height="15" viewBox="0 0 17 15"><path d="M0 0h16v12H5v3l-3-3H0z" fill="#fff" /><path d="M3 3.500h10M3 6h10M3 8.500h7" stroke="#3d3846" strokeWidth="1.100" /></Svg>
        <Badge><Text $size={11.5} $line={14}>1</Text></Badge>
      </Notice>
      <Slot $w={18} />
      <ShowDesktop />
    </Bar>
  );
}

export default function App() {
  return (
    <Desktop>
      <Global />
      <Browser />
      <WebPage />
      <Taskbar />
      <SecurityWindow />
    </Desktop>
  );
}
